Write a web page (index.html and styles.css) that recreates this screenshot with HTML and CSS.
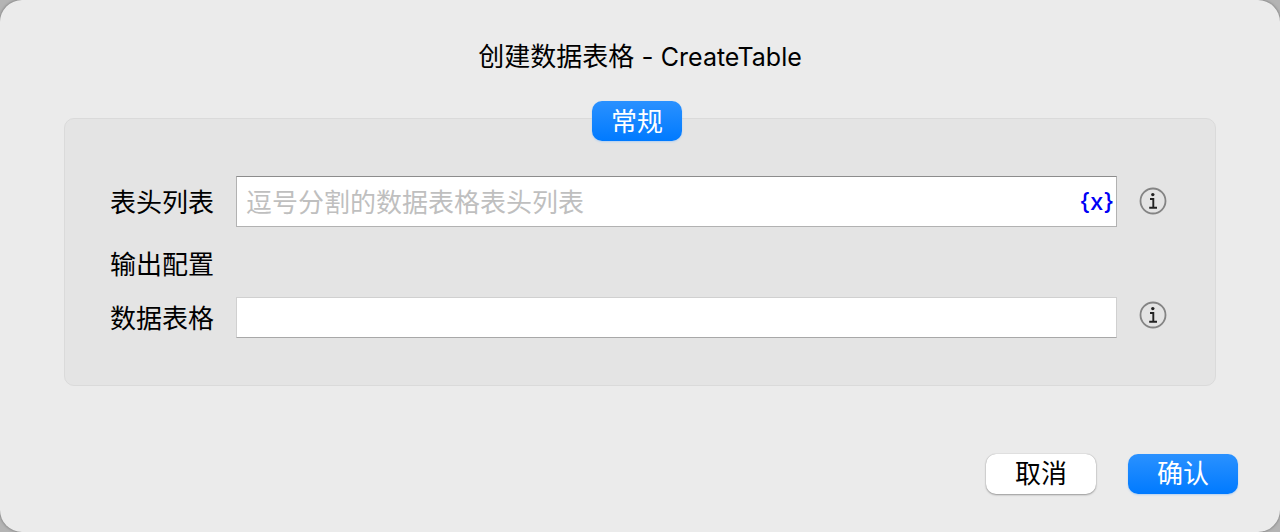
FILE: index.html
```html
<!DOCTYPE html>
<html lang="zh-CN">
<head>
<meta charset="utf-8">
<meta name="viewport" content="width=device-width, initial-scale=1">
<title>创建数据表格 - CreateTable</title>
<link rel="stylesheet" href="styles.css">
</head>
<body>
<form class="dialog">
  <h1 class="title">创建数据表格 - <span class="latin">CreateTable</span></h1>
  <div class="tabs">
    <button class="button primary tab" type="button">常规</button>
  </div>
  <section class="panel">
    <label class="label" for="headers">表头列表</label>
    <div class="field">
      <input class="input" id="headers" type="text" placeholder="逗号分割的数据表格表头列表">
      <button class="variable" type="button">{x}</button>
    </div>
    <button class="info" type="button" aria-label="表头列表说明">
      <svg class="info-icon" viewBox="0 0 28 28" aria-hidden="true">
        <circle cx="14" cy="14" r="12.5" fill="none" stroke="#848484" stroke-width="1.8"/>
        <circle cx="13.8" cy="7.6" r="1.7" fill="#222"/>
        <path d="M11 12h3.3v8.6M10.2 20.8h7.8" fill="none" stroke="#222" stroke-width="1.9"/>
      </svg>
    </button>
    <h2 class="label heading">输出配置</h2>
    <label class="label" for="table">数据表格</label>
    <div class="field plain">
      <input class="input" id="table" type="text">
    </div>
    <button class="info raised" type="button" aria-label="数据表格说明">
      <svg class="info-icon" viewBox="0 0 28 28" aria-hidden="true">
        <circle cx="14" cy="14" r="12.5" fill="none" stroke="#848484" stroke-width="1.8"/>
        <circle cx="13.8" cy="7.6" r="1.7" fill="#222"/>
        <path d="M11 12h3.3v8.6M10.2 20.8h7.8" fill="none" stroke="#222" stroke-width="1.9"/>
      </svg>
    </button>
  </section>
  <div class="actions">
    <button class="button" type="button">取消</button>
    <button class="button primary" type="submit">确认</button>
  </div>
</form>
</body>
</html>
```
FILE: styles.css
```css
* {
  box-sizing: border-box;
}

body {
  margin: 0;
  background: #b4b4b4;
  color: #000;
  font: 26px/40px Inter, "Noto Sans CJK SC", sans-serif;
}

button,
input {
  margin: 0;
  padding: 0;
  border: 0;
  color: inherit;
  font: inherit;
}

.dialog {
  display: flex;
  flex-direction: column;
  min-height: 100vh;
  padding-top: 37px;
  border-radius: 22px;
  background: #ebebeb;
  box-shadow: 0 0 3px #666;
}

.title {
  margin: 0;
  font-size: 26px;
  font-weight: 400;
  text-align: center;
}

.latin {
  font-size: 25px;
  line-height: 1;
}

.tabs {
  display: flex;
  justify-content: center;
  margin: 24px 0 -23px;
  padding-right: 6px;
  z-index: 1;
}

.button {
  width: 110px;
  height: 40px;
  border-radius: 10px;
  background: #fff;
  box-shadow: 0 0 1px #999, 0 1px 2px #999;
  line-height: 38px;
}

.primary {
  background: linear-gradient(#2a91ff, #007aff);
  box-shadow: 0 1px 2px #b4d0f0;
  color: #fff;
}

.tab {
  width: 90px;
  padding-top: 2px;
}

.panel {
  display: grid;
  grid-template-columns: 104px 1fr 28px;
  gap: 16px 22px;
  align-items: center;
  margin: 0 64px;
  padding: 57px 48px 47px 45px;
  border: 1px solid #dadada;
  border-radius: 10px;
  background: #e4e4e4;
}

.label {
  padding-top: 2px;
  line-height: 38px;
  white-space: nowrap;
}

.heading {
  grid-column: 1 / -1;
  margin: 0;
  padding-top: 6px;
  font-size: 26px;
  font-weight: 400;
  line-height: 32px;
}

.field {
  display: flex;
  align-items: center;
  height: 51px;
  padding: 0 2px 0 9px;
  border: 1px solid #b2b2b2;
  border-top-color: #8c8c8c;
  background: #fff;
}

.plain {
  height: 41px;
  border-color: #d0d0d0;
  border-bottom-color: #a8a8a8;
}

.input {
  flex: 1;
  min-width: 0;
  height: 100%;
  padding-top: 2px;
  background: transparent;
  outline: 0;
}

.input::placeholder {
  color: #bfbfbf;
  opacity: 1;
}

.variable {
  background: none;
  color: #0000f5;
  font-size: 24px;
  font-weight: 500;
}

.info {
  height: 28px;
  margin-bottom: 1px;
  background: none;
}

.raised {
  margin-bottom: 5px;
}

.info-icon {
  display: block;
  width: 28px;
  height: 28px;
}

.actions {
  display: flex;
  justify-content: flex-end;
  gap: 32px;
  margin-top: auto;
  padding: 24px 42px 38px;
}
```
